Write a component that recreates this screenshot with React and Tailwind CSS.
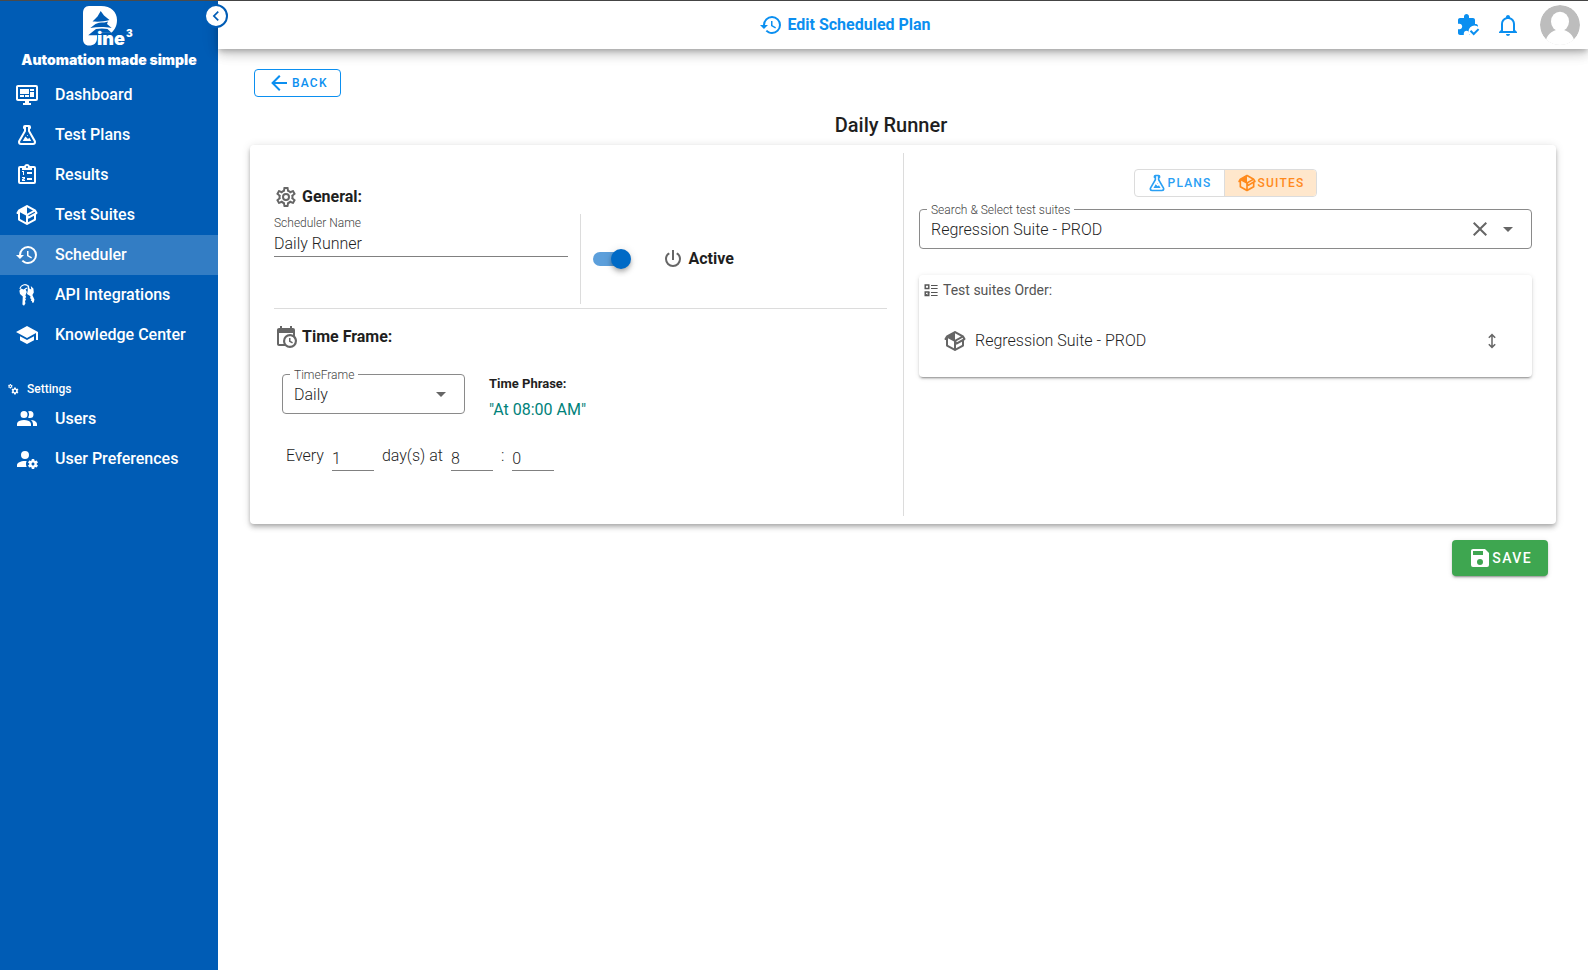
import { useState } from 'react'

const icons = {
  dashboard:
    'M21,16V4H3V16H21M21,2A2,2 0 0,1 23,4V16A2,2 0 0,1 21,18H14V20H16V22H8V20H10V18H3C1.89,18 1,17.1 1,16V4C1,2.89 1.89,2 3,2H21M5,6H14V11H5V6M15,6H19V8H15V6M19,9V14H15V9H19M5,12H9V14H5V12M10,12H14V14H10V12Z',
  flask:
    'M5,19A1,1 0 0,0 6,20H18A1,1 0 0,0 19,19C19,18.79 18.93,18.59 18.82,18.43L13,8.35V4H11V8.35L5.18,18.43C5.07,18.59 5,18.79 5,19M6,22A3,3 0 0,1 3,19C3,18.4 3.18,17.84 3.5,17.37L9,7.81V6A1,1 0 0,1 8,5V4A2,2 0 0,1 10,2H14A2,2 0 0,1 16,4V5A1,1 0 0,1 15,6V7.81L20.5,17.37C20.82,17.84 21,18.4 21,19A3,3 0 0,1 18,22H6M13,16L14.34,14.66L16.27,18H7.73L10.39,13.39L13,16M12.5,12A0.5,0.5 0 0,1 13,12.5A0.5,0.5 0 0,1 12.5,13A0.5,0.5 0 0,1 12,12.5A0.5,0.5 0 0,1 12.5,12Z',
  clipboard:
    'M19,3H14.82C14.4,1.84 13.3,1 12,1C10.7,1 9.6,1.84 9.18,3H5A2,2 0 0,0 3,5V19A2,2 0 0,0 5,21H19A2,2 0 0,0 21,19V5A2,2 0 0,0 19,3M12,3A1,1 0 0,1 13,4A1,1 0 0,1 12,5A1,1 0 0,1 11,4A1,1 0 0,1 12,3M7,7H17V5H19V19H5V5H7V7M12,9H17V11H12V9M12,15H17V17H12V15M8,12V9H7V8H9V12H8M7,14H10V16L8.2,17H10V18H7V16.2L8.8,15H7V14Z',
  package:
    'M2,10.96C1.5,10.68 1.35,10.07 1.63,9.59L3.13,7C3.24,6.8 3.41,6.66 3.6,6.58L11.43,2.18C11.59,2.06 11.79,2 12,2C12.21,2 12.41,2.06 12.57,2.18L20.47,6.62C20.66,6.72 20.82,6.88 20.91,7.08L22.36,9.6C22.64,10.08 22.47,10.69 22,10.96L21,11.54V16.5C21,16.88 20.79,17.21 20.47,17.38L12.57,21.82C12.41,21.94 12.21,22 12,22C11.79,22 11.59,21.94 11.43,21.82L3.53,17.38C3.21,17.21 3,16.88 3,16.5V10.96C2.7,11.13 2.32,11.14 2,10.96M12,4.15V4.15L12,10.85V10.85L17.96,7.5L12,4.15M5,15.91L11,19.29V12.58L5,9.21V15.91M19,15.91V12.69L14,15.59C13.67,15.77 13.3,15.76 13,15.6V19.29L19,15.91M13.85,13.36L20.13,9.73L19.55,8.72L13.27,12.35L13.85,13.36Z',
  history:
    'M13.5,8H12V13L16.28,15.54L17,14.33L13.5,12.25V8M13,3A9,9 0 0,0 4,12H1L4.96,16.03L9,12H6A7,7 0 0,1 13,5A7,7 0 0,1 20,12A7,7 0 0,1 13,19C11.07,19 9.32,18.21 8.06,16.94L6.64,18.36C8.27,20 10.5,21 13,21A9,9 0 0,0 22,12A9,9 0 0,0 13,3',
  school: 'M12,3L1,9L12,15L21,10.09V17H23V9M5,13.18V17.18L12,21L19,17.18V13.18L12,17L5,13.18Z',
  cogs: 'M15.9,18.45C17.25,18.45 18.35,17.35 18.35,16C18.35,14.65 17.25,13.55 15.9,13.55C14.54,13.55 13.45,14.65 13.45,16C13.45,17.35 14.54,18.45 15.9,18.45M21.1,16.68L22.58,17.84C22.71,17.95 22.75,18.13 22.66,18.29L21.26,20.71C21.17,20.86 21,20.92 20.83,20.86L19.09,20.16C18.73,20.44 18.33,20.67 17.91,20.85L17.64,22.7C17.62,22.87 17.47,23 17.3,23H14.5C14.32,23 14.18,22.87 14.15,22.7L13.89,20.85C13.46,20.67 13.07,20.44 12.71,20.16L10.96,20.86C10.81,20.92 10.62,20.86 10.54,20.71L9.14,18.29C9.05,18.13 9.09,17.95 9.22,17.84L10.7,16.68L10.65,16L10.7,15.31L9.22,14.16C9.09,14.05 9.05,13.86 9.14,13.71L10.54,11.29C10.62,11.13 10.81,11.07 10.96,11.13L12.71,11.84C13.07,11.56 13.46,11.32 13.89,11.15L14.15,9.29C14.18,9.13 14.32,9 14.5,9H17.3C17.47,9 17.62,9.13 17.64,9.29L17.91,11.15C18.33,11.32 18.73,11.56 19.09,11.84L20.83,11.13C21,11.07 21.17,11.13 21.26,11.29L22.66,13.71C22.75,13.86 22.71,14.05 22.58,14.16L21.1,15.31L21.15,16L21.1,16.68M6.69,8.07C7.56,8.07 8.26,7.37 8.26,6.5C8.26,5.63 7.56,4.92 6.69,4.92C5.82,4.92 5.12,5.63 5.12,6.5C5.12,7.37 5.82,8.07 6.69,8.07M10.03,6.94L11,7.68C11.07,7.75 11.09,7.87 11.03,7.97L10.13,9.53C10.08,9.63 9.96,9.67 9.86,9.63L8.74,9.18L8,9.62L7.81,10.81C7.79,10.92 7.7,11 7.59,11H5.79C5.67,11 5.58,10.92 5.56,10.81L5.4,9.62L4.64,9.18L3.52,9.63C3.41,9.67 3.3,9.63 3.24,9.53L2.34,7.97C2.28,7.87 2.31,7.75 2.39,7.68L3.34,6.94L3.31,6.5L3.34,6.06L2.39,5.32C2.31,5.25 2.28,5.13 2.34,5.03L3.24,3.47C3.3,3.37 3.41,3.33 3.52,3.37L4.63,3.82L5.4,3.38L5.56,2.19C5.58,2.08 5.67,2 5.79,2H7.59C7.7,2 7.79,2.08 7.81,2.19L8,3.38L8.74,3.82L9.86,3.37C9.96,3.33 10.08,3.37 10.13,3.47L11.03,5.03C11.09,5.13 11.07,5.25 11,5.32L10.03,6.06L10.06,6.5L10.03,6.94Z',
  users:
    'M16 17V19H2V17S2 13 9 13 16 17 16 17M12.5 7.5A3.5 3.5 0 1 0 9 11A3.5 3.5 0 0 0 12.5 7.5M15.94 13A5.32 5.32 0 0 1 18 17V19H22V17S22 13.37 15.94 13M15 4A3.39 3.39 0 0 0 13.07 4.59A5 5 0 0 1 13.07 10.41A3.39 3.39 0 0 0 15 11A3.5 3.5 0 0 0 15 4Z',
  userCog:
    'M10 4A4 4 0 0 0 6 8A4 4 0 0 0 10 12A4 4 0 0 0 14 8A4 4 0 0 0 10 4M17 12C16.87 12 16.76 12.09 16.74 12.21L16.55 13.53C16.25 13.66 15.96 13.82 15.7 14L14.46 13.5C14.35 13.5 14.22 13.5 14.15 13.63L13.15 15.36C13.09 15.47 13.11 15.6 13.21 15.68L14.27 16.5C14.25 16.67 14.24 16.83 14.24 17C14.24 17.17 14.25 17.33 14.27 17.5L13.21 18.32C13.12 18.4 13.09 18.53 13.15 18.64L14.15 20.37C14.21 20.5 14.34 20.5 14.46 20.5L15.7 20C15.96 20.18 16.24 20.35 16.55 20.47L16.74 21.79C16.76 21.91 16.86 22 17 22H19C19.11 22 19.22 21.91 19.24 21.79L19.43 20.47C19.73 20.34 20 20.18 20.27 20L21.5 20.5C21.63 20.5 21.76 20.5 21.83 20.37L22.83 18.64C22.89 18.53 22.86 18.4 22.77 18.32L21.7 17.5C21.72 17.33 21.74 17.17 21.74 17C21.74 16.83 21.73 16.67 21.7 16.5L22.76 15.68C22.85 15.6 22.88 15.47 22.82 15.36L21.82 13.63C21.76 13.5 21.63 13.5 21.5 13.5L20.27 14C20 13.82 19.73 13.65 19.42 13.53L19.23 12.21C19.22 12.09 19.11 12 19 12H17M10 14C5.58 14 2 15.79 2 18V20H11.68A7 7 0 0 1 11 17A7 7 0 0 1 11.64 14.09C11.11 14.03 10.56 14 10 14M18 15.5C18.83 15.5 19.5 16.17 19.5 17C19.5 17.83 18.83 18.5 18 18.5C17.16 18.5 16.5 17.83 16.5 17C16.5 16.17 17.17 15.5 18 15.5Z',
  bell: 'M10 21H14C14 22.1 13.1 23 12 23S10 22.1 10 21M21 19V20H3V19L5 17V11C5 7.9 7.03 5.2 10 4.3V4C10 2.9 10.9 2 12 2S14 2.9 14 4V4.3C16.97 5.2 19 7.9 19 11V17L21 19M17 11C17 8.2 14.8 6 12 6S7 8.2 7 11V18H17V11Z',
  cog: 'M12,8A4,4 0 0,1 16,12A4,4 0 0,1 12,16A4,4 0 0,1 8,12A4,4 0 0,1 12,8M12,10A2,2 0 0,0 10,12A2,2 0 0,0 12,14A2,2 0 0,0 14,12A2,2 0 0,0 12,10M10,22C9.75,22 9.54,21.82 9.5,21.58L9.13,18.93C8.5,18.68 7.96,18.34 7.44,17.94L4.95,18.95C4.73,19.03 4.46,18.95 4.34,18.73L2.34,15.27C2.21,15.05 2.27,14.78 2.46,14.63L4.57,12.97L4.5,12L4.57,11L2.46,9.37C2.27,9.22 2.21,8.95 2.34,8.73L4.34,5.27C4.46,5.05 4.73,4.96 4.95,5.05L7.44,6.05C7.96,5.66 8.5,5.32 9.13,5.07L9.5,2.42C9.54,2.18 9.75,2 10,2H14C14.25,2 14.46,2.18 14.5,2.42L14.87,5.07C15.5,5.32 16.04,5.66 16.56,6.05L19.05,5.05C19.27,4.96 19.54,5.05 19.66,5.27L21.66,8.73C21.79,8.95 21.73,9.22 21.54,9.37L19.43,11L19.5,12L19.43,13L21.54,14.63C21.73,14.78 21.79,15.05 21.66,15.27L19.66,18.73C19.54,18.95 19.27,19.04 19.05,18.95L16.56,17.95C16.04,18.34 15.5,18.68 14.87,18.93L14.5,21.58C14.46,21.82 14.25,22 14,22H10M11.25,4L10.88,6.61C9.68,6.86 8.62,7.5 7.85,8.39L5.44,7.35L4.69,8.65L6.8,10.2C6.4,11.37 6.4,12.64 6.8,13.8L4.68,15.36L5.43,16.66L7.86,15.62C8.63,16.5 9.68,17.14 10.87,17.38L11.24,20H12.76L13.13,17.39C14.32,17.14 15.37,16.5 16.14,15.62L18.57,16.66L19.32,15.36L17.2,13.81C17.6,12.64 17.6,11.37 17.2,10.2L19.31,8.65L18.56,7.35L16.15,8.39C15.38,7.5 14.32,6.86 13.12,6.62L12.75,4H11.25Z',
  calendarClock:
    'M15,13H16.5V15.82L18.94,17.23L18.19,18.53L15,16.69V13M19,8H5V19H9.67C9.24,18.09 9,17.07 9,16A7,7 0 0,1 16,9C17.07,9 18.09,9.24 19,9.67V8M5,21C3.89,21 3,20.1 3,19V5C3,3.89 3.89,3 5,3H6V1H8V3H16V1H18V3H19A2,2 0 0,1 21,5V11.1C22.24,12.36 23,14.09 23,16A7,7 0 0,1 16,23C14.09,23 12.36,22.24 11.1,21H5M16,11.15A4.85,4.85 0 0,0 11.15,16C11.15,18.68 13.32,20.85 16,20.85A4.85,4.85 0 0,0 20.85,16C20.85,13.32 18.68,11.15 16,11.15Z',
  power:
    'M16.56,5.44L15.11,6.89C16.84,7.94 18,9.83 18,12A6,6 0 0,1 12,18A6,6 0 0,1 6,12C6,9.83 7.16,7.94 8.88,6.88L7.44,5.44C5.36,6.88 4,9.28 4,12A8,8 0 0,0 12,20A8,8 0 0,0 20,12C20,9.28 18.64,6.88 16.56,5.44M13,3H11V13H13',
  save: 'M15,9H5V5H15M12,19A3,3 0 0,1 9,16A3,3 0 0,1 12,13A3,3 0 0,1 15,16A3,3 0 0,1 12,19M17,3H5C3.89,3 3,3.9 3,5V19A2,2 0 0,0 5,21H19A2,2 0 0,0 21,19V7L17,3Z',
  arrowLeft: 'M20,11V13H8L13.5,18.5L12.08,19.92L4.16,12L12.08,4.08L13.5,5.5L8,11H20Z',
  close:
    'M19,6.41L17.59,5L12,10.59L6.41,5L5,6.41L10.59,12L5,17.59L6.41,19L12,13.41L17.59,19L19,17.59L13.41,12L19,6.41Z',
  menuDown: 'M7,10L12,15L17,10H7Z',
  chevronLeft: 'M15.41,16.58L10.83,12L15.41,7.41L14,6L8,12L14,18L15.41,16.58Z',
}

const mainLinks = [
  { label: 'Dashboard', icon: 'dashboard' },
  { label: 'Test Plans', icon: 'flask' },
  { label: 'Results', icon: 'clipboard' },
  { label: 'Test Suites', icon: 'package' },
  { label: 'Scheduler', icon: 'history' },
  { label: 'API Integrations', icon: 'keys' },
  { label: 'Knowledge Center', icon: 'school' },
]

const settingsLinks = [
  { label: 'Users', icon: 'users' },
  { label: 'User Preferences', icon: 'userCog' },
]

function Icon({ name, className = 'size-6' }) {
  return (
    <svg viewBox="0 0 24 24" fill="currentColor" aria-hidden="true" className={`shrink-0 ${className}`}>
      <path d={icons[name]} />
    </svg>
  )
}

// Two keys hanging from a ring
function KeysIcon() {
  return (
    <svg viewBox="0 0 24 24" fill="none" aria-hidden="true" className="size-6 shrink-0">
      <path d="M5 6A4.8 4.8 0 0 1 13.5 3.5" stroke="currentColor" strokeWidth="1.1" />
      <path
        fill="currentColor"
        d="M6 5.4L8.6 6.6L11.4 4.4L12.4 5.6L10.6 6.6L11.8 9L10.4 12.4L11.2 14L10.2 15.2L11 16.8L10 18L10.4 20.6L9 22.8L7.4 21.4L7.8 13.4L5 11L4.4 7.8Z"
      />
      <path
        fill="currentColor"
        d="M12.6 3.4L14 2L14.4 5.6L16.2 6.6L15.8 3L18.4 5.4L18.8 9.6L17.4 12L19.4 16.4L18.8 19.6L17.2 19.8L17 18.2L15.8 17.6L16.4 16L15 15.2L15.6 13.6L14.4 12.4L12 11L12.8 7.2Z"
      />
    </svg>
  )
}

function PuzzleCheckIcon() {
  return (
    <svg viewBox="0 0 24 24" aria-hidden="true" className="size-6">
      <path
        fill="currentColor"
        d="M22 13.5C22 15.3 20.7 16 19 16V22H13.2V20.5C13.2 19 12 17.8 10.5 17.8S7.8 19 7.8 20.5V22H4C2.9 22 2 21.1 2 20V16.2H3.5C5 16.2 6.2 15 6.2 13.5S5 10.8 3.5 10.8H2V7C2 5.9 2.9 5 4 5H8V3.5C8 2.1 9.1 1 10.5 1S13 2.1 13 3.5V5H17C18.1 5 19 5.9 19 7V11H20C21.4 11 22 12.1 22 13.5Z"
      />
      <circle cx="18.5" cy="18.5" r="6" fill="white" />
      <path d="M14.5 17.8L17.7 21L22.6 16.1" fill="none" stroke="currentColor" strokeWidth="2" />
    </svg>
  )
}

function OrderIcon() {
  return (
    <svg viewBox="0 0 16 16" fill="none" stroke="currentColor" aria-hidden="true" className="size-4">
      <path strokeWidth="1.4" d="M2.200 3H5.800V6.500H2.200ZM2.200 10H5.800V13.500H2.200Z" />
      <path strokeWidth="1" d="M2.600 11.600L3.800 12.800L6.400 10.200" />
      <path strokeWidth="1.200" d="M8 3.500H14.600M8 6.500H14.600M8 10.500H14.600M8 13.500H14.600" />
    </svg>
  )
}

function UpDownIcon() {
  return (
    <svg viewBox="0 0 16 16" fill="none" stroke="currentColor" strokeWidth="1.5" aria-hidden="true" className="size-4">
      <path d="M8 2V14M4.8 4.8L8 1.6L11.2 4.8M4.8 11.2L8 14.4L11.2 11.2" />
    </svg>
  )
}

function Logo() {
  return (
    <svg viewBox="0 0 52 46" role="img" aria-label="Pine3" className="h-[46px] w-[52px]">
      <path
        fill="white"
        d="M6 0H18C28 0 34 6 34 14C34 20 31.500 24 28.700 26.500H14V32C14 37 11 39.500 6 39.500C2 39.500 0 37 0 33V7C0 3 2 0 6 0Z"
      />
      <path
        fill="#005cb5"
        d="M17.700 5L21 9.500L26.500 14C21 15.800 15 15.800 9.500 15.500L14.500 10.500ZM16 16.800C20 16.800 23 16.400 25 15.600L24 18L28.700 22C20 20.500 14 21 7.300 22L12.500 18ZM13 23C17 22.300 21 22.300 24.500 23L28.500 26.800H20L17 25.500L14.500 29.300H5.200L10.500 25Z"
      />
      <text x="14" y="39" fill="white" className="font-[Inter] text-[18px] font-black">
        ine
      </text>
      <text x="43" y="31" fill="white" className="font-[Inter] text-[10px] font-black">
        3
      </text>
    </svg>
  )
}

function NavLink({ label, icon, active }) {
  return (
    <a
      href="#"
      className={`flex h-10 items-center gap-4 pl-[15px] text-base font-medium text-white ${active ? 'bg-[#337dc4]' : ''}`}
    >
      {icon === 'keys' ? <KeysIcon /> : <Icon name={icon} />}
      {label}
    </a>
  )
}

function Sidebar() {
  return (
    <aside className="relative w-[218px] shrink-0 bg-[#005cb5]">
      <div className="flex h-[74px] flex-col items-center pt-[5px]">
        <Logo />
        <p className="font-[Inter] text-sm leading-4 font-black text-white">Automation made simple</p>
      </div>
      <nav>
        {mainLinks.map((link) => (
          <NavLink key={link.label} {...link} active={link.label === 'Scheduler'} />
        ))}
        <h2 className="mt-6 flex h-5 items-center gap-2 pl-[7px] text-xs font-medium text-white">
          <Icon name="cogs" className="size-3" />
          Settings
        </h2>
        {settingsLinks.map((link) => (
          <NavLink key={link.label} {...link} />
        ))}
      </nav>
      <button
        type="button"
        aria-label="Collapse menu"
        className="absolute top-[3px] -right-[10px] z-30 flex size-6 items-center justify-center rounded-full border-2 border-[#005cb5] bg-white text-[#005cb5]"
      >
        <Icon name="chevronLeft" className="size-5" />
      </button>
    </aside>
  )
}

function Header() {
  return (
    <header className="relative z-20 flex h-12 items-center bg-white pr-2 pl-4 text-[#0b8ff0] shadow-[0_3px_5px_-1px_rgba(0,0,0,0.2),0_6px_10px_0_rgba(0,0,0,0.14),0_1px_18px_0_rgba(0,0,0,0.12)]">
      <div className="flex flex-1 items-center justify-center gap-1">
        <Icon name="history" />
        <h1 className="text-base font-bold">Edit Scheduled Plan</h1>
      </div>
      <button type="button" aria-label="Integrations">
        <PuzzleCheckIcon />
      </button>
      <button type="button" aria-label="Notifications" className="ml-4">
        <Icon name="bell" />
      </button>
      <button type="button" aria-label="Account" className="ml-5 size-10 overflow-hidden rounded-full">
        <svg viewBox="0 0 40 40" aria-hidden="true" className="size-10">
          <circle cx="20" cy="20" r="20" fill="#bdbdbd" />
          <ellipse cx="20" cy="16.500" rx="9" ry="9.800" fill="white" />
          <path d="M5 40C5.500 32 9 27.500 16 25H24C31 27.500 34.500 32 35 40Z" fill="white" />
        </svg>
      </button>
    </header>
  )
}

function GeneralSection() {
  const [name, setName] = useState('Daily Runner')
  const [active, setActive] = useState(true)

  return (
    <section className="border-b border-[#dcdcdc] pb-1">
      <h3 className="flex h-6 items-center gap-1 text-base font-bold">
        <Icon name="cog" className="size-6 text-[#666]" />
        General:
      </h3>
      <div className="mt-[5px] grid h-[90px] grid-cols-2">
        <div className="border-r border-[#dcdcdc] pr-3">
          <label htmlFor="scheduler-name" className="block text-xs leading-[18px] font-light text-[#444]">
            Scheduler Name
          </label>
          <input
            id="scheduler-name"
            type="text"
            value={name}
            onChange={(e) => setName(e.target.value)}
            className="h-6 w-full border-b border-[#808080] text-base font-light outline-none"
          />
        </div>
        <div className="flex items-center pl-3">
          <input
            id="scheduler-active"
            type="checkbox"
            role="switch"
            checked={active}
            onChange={(e) => setActive(e.target.checked)}
            className="relative h-[14px] w-9 appearance-none rounded-full bg-[#5c9fdb] before:absolute before:-top-[3px] before:-right-[2px] before:size-5 before:rounded-full before:bg-[#006ac6] before:shadow-[0_2px_4px_-1px_rgba(0,0,0,0.2),0_4px_5px_0_rgba(0,0,0,0.14),0_1px_10px_0_rgba(0,0,0,0.12)]"
          />
          <label htmlFor="scheduler-active" className="ml-8 flex items-center gap-1 text-base font-bold">
            <Icon name="power" className="size-6 text-[#666]" />
            Active
          </label>
        </div>
      </div>
    </section>
  )
}

function SmallField({ label, value }) {
  return (
    <input
      type="text"
      aria-label={label}
      defaultValue={value}
      className="h-[29px] w-[42px] border-b border-[#808080] pt-1 font-light outline-none"
    />
  )
}

function TimeFrameSection() {
  return (
    <section className="pt-4">
      <h3 className="flex h-6 items-center gap-1 text-base font-bold">
        <Icon name="calendarClock" className="size-6 text-[#666]" />
        Time Frame:
      </h3>
      <div className="mt-[25px] flex h-12 gap-6 pl-2">
        <div className="relative h-10 w-[183px]">
          <label
            htmlFor="time-frame"
            className="absolute -top-[7px] left-2 bg-white px-1 text-xs leading-4 font-light text-[#444]"
          >
            TimeFrame
          </label>
          <select
            id="time-frame"
            className="h-full w-full appearance-none rounded border border-[#8a8a8a] pt-[2px] pl-[11px] text-base font-light"
          >
            <option>Daily</option>
            <option>Weekly</option>
            <option>Monthly</option>
          </select>
          <span className="pointer-events-none absolute top-2 right-3 text-[#666]">
            <Icon name="menuDown" />
          </span>
        </div>
        <div>
          <p className="text-[13px] leading-5 font-bold">Time Phrase:</p>
          <p className="mt-1 text-base leading-6 text-[#00827a]">"At 08:00 AM"</p>
        </div>
      </div>
      <div className="mt-5 flex gap-2 pl-3 text-base leading-7 font-light">
        <span>Every</span>
        <SmallField label="Days" value="1" />
        <span>day(s) at</span>
        <SmallField label="Hour" value="8" />
        <span>:</span>
        <SmallField label="Minute" value="0" />
      </div>
    </section>
  )
}

function SuitesSection() {
  return (
    <section className="w-1/2 border-l border-[#dcdcdc] pt-4 pr-6 pl-[15px]">
      <div className="mx-auto flex h-7 w-fit overflow-hidden rounded border border-[#dcdcdc] text-xs font-medium tracking-widest">
        <button type="button" className="flex items-center gap-px px-3 text-[#2ba0f4]">
          <Icon name="flask" className="size-5" />
          PLANS
        </button>
        <button
          type="button"
          className="flex items-center gap-px border-l border-[#dcdcdc] bg-[#ffe7cc] px-3 text-[#ff8a1c]"
        >
          <Icon name="package" className="size-5" />
          SUITES
        </button>
      </div>

      <div className="relative mt-3 h-10">
        <label
          htmlFor="suites"
          className="absolute -top-[7px] left-2 bg-white px-1 text-xs leading-4 font-light text-[#444]"
        >
          Search &amp; Select test suites
        </label>
        <select
          id="suites"
          className="h-full w-full appearance-none rounded border border-[#8a8a8a] pt-[2px] pl-[11px] text-base font-light"
        >
          <option>Regression Suite - PROD</option>
        </select>
        <div className="absolute top-2 right-3 flex gap-1 text-[#666]">
          <button type="button" aria-label="Clear">
            <Icon name="close" />
          </button>
          <span className="pointer-events-none">
            <Icon name="menuDown" />
          </span>
        </div>
      </div>

      <div className="mt-[26px] rounded pt-[3px] pb-3 shadow-[0_3px_1px_-2px_rgba(0,0,0,0.2),0_2px_2px_0_rgba(0,0,0,0.14),0_1px_5px_0_rgba(0,0,0,0.12)]">
        <h3 className="flex h-6 items-center gap-1 pl-1 text-sm text-[#555]">
          <OrderIcon />
          Test suites Order:
        </h3>
        <div className="mt-[15px] flex h-12 items-center pr-8 pl-6 text-base font-light">
          <span className="text-[#666]">
            <Icon name="package" />
          </span>
          <span className="ml-2 flex-1">Regression Suite - PROD</span>
          <button type="button" aria-label="Reorder" className="text-[#666]">
            <UpDownIcon />
          </button>
        </div>
      </div>
    </section>
  )
}

export default function App() {
  return (
    <div className="flex min-h-screen border-t border-[#4a4a4a] bg-white font-[Roboto,sans-serif] text-[#1f1f1f]">
      <Sidebar />
      <div className="min-w-0 flex-1">
        <Header />
        <main className="px-8 pt-5">
          <button
            type="button"
            className="ml-1 flex h-7 items-center gap-px rounded border border-[#0b8ff0] px-3 text-xs font-medium tracking-widest text-[#0b8ff0]"
          >
            <Icon name="arrowLeft" />
            BACK
          </button>
          <h2 className="mt-3 pr-6 text-center text-xl leading-8 font-medium">Daily Runner</h2>

          <div className="mt-1 flex rounded py-2 shadow-[0_2px_4px_-1px_rgba(0,0,0,0.2),0_4px_5px_0_rgba(0,0,0,0.14),0_1px_10px_0_rgba(0,0,0,0.12)]">
            <div className="w-1/2 pt-8 pr-4 pb-[45px] pl-6">
              <GeneralSection />
              <TimeFrameSection />
            </div>
            <SuitesSection />
          </div>

          <div className="mt-4 flex justify-end pr-2">
            <button
              type="button"
              className="flex h-9 items-center rounded bg-[#3ea650] px-4 text-sm font-medium tracking-widest text-white shadow-[0_3px_1px_-2px_rgba(0,0,0,0.2),0_2px_2px_0_rgba(0,0,0,0.14),0_1px_5px_0_rgba(0,0,0,0.12)]"
            >
              <Icon name="save" />
              SAVE
            </button>
          </div>
        </main>
      </div>
    </div>
  )
}
